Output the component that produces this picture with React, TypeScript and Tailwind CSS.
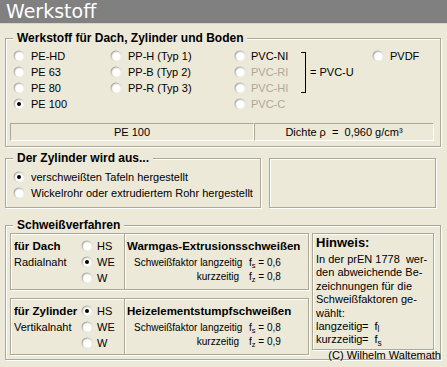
const etched = "border border-[#aca899] shadow-[inset_1px_1px_0_#fff,1px_1px_0_#fff]";
const sunken = "border border-t-[#aca899] border-l-[#aca899] border-b-white border-r-white";

function Dot({ checked }: { checked?: boolean }) {
  return (
    <svg width="12" height="12" viewBox="0 0 12 12" className="shrink-0">
      <defs>
        <linearGradient id="ro" x1="0" y1="0" x2="1" y2="1">
          <stop offset="0" stopColor="#8a8a8a" />
          <stop offset="0.55" stopColor="#d8d8d0" />
          <stop offset="1" stopColor="#ffffff" />
        </linearGradient>
        <linearGradient id="ri" x1="0" y1="0" x2="1" y2="1">
          <stop offset="0" stopColor="#c4c4c0" />
          <stop offset="0.6" stopColor="#ffffff" />
        </linearGradient>
      </defs>
      <circle cx="6" cy="6" r="5.5" fill="url(#ro)" />
      <circle cx="6" cy="6" r="4.5" fill="url(#ri)" />
      <circle cx="6" cy="6" r="3.5" fill="#fff" />
      {checked && <circle cx="6" cy="6" r="2" fill="#000" />}
    </svg>
  );
}

function Radio({ label, checked, disabled, gap = "gap-[6px]" }: { label: string; checked?: boolean; disabled?: boolean; gap?: string }) {
  return (
    <div className={`flex items-center h-[16px] ${gap}`}>
      <Dot checked={checked} />
      <span className={`whitespace-nowrap ${disabled ? "text-[#aca899]" : ""}`}>{label}</span>
    </div>
  );
}

function Factor({ long, short, a, b }: { long: string; short: string; a: string; b: string }) {
  return (
    <div className="mt-[2px] pl-[7px] grid grid-cols-[105px_auto] gap-x-[10px] text-[10px] leading-[14px]">
      <span className="text-right whitespace-nowrap">Schweißfaktor langzeitig</span>
      <span className="whitespace-nowrap">f<sub>s</sub> = {long}</span>
      <span className="text-right">kurzzeitig</span>
      <span className="whitespace-nowrap">f<sub>z</sub> = {short}</span>
      <span className="hidden">{a}{b}</span>
    </div>
  );
}

function WeldRow({ name, seam, checked, title, long, short }: { name: string; seam: string; checked: string; title: string; long: string; short: string }) {
  return (
    <div className={`flex w-[299px] h-[57px] ${etched}`}>
      <div className="flex w-[114px] pl-[3px] pt-[4px] border-r border-[#aca899]">
        <div className="w-[67px]">
          <div className="font-bold text-[11.5px] leading-[16px] whitespace-nowrap">{name}</div>
          <div>{seam}</div>
        </div>
        <div>
          {["HS", "WE", "W"].map((l) => (
            <Radio key={l} label={l} checked={l === checked} gap="gap-[4px]" />
          ))}
        </div>
      </div>
      <div className="flex-1 pl-[2px] pt-[4px] shadow-[inset_1px_0_0_#fff]">
        <div className="font-bold text-[11.5px] leading-[16px] whitespace-nowrap">{title}</div>
        <Factor long={long} short={short} a="" b="" />
      </div>
    </div>
  );
}

export default function App() {
  return (
    <div className="w-[447px] h-[367px] overflow-hidden bg-[#ece9d8] text-black text-[11px] leading-[16px] font-['Liberation_Sans',Arial,sans-serif]">
      <div className="h-[24px] bg-[#808080] border-b border-[#d4d4d4] pl-[6px] text-white text-[19px] leading-[23px] font-['DejaVu_Sans',sans-serif]">
        Werkstoff
      </div>

      <fieldset className={`ml-[5px] mt-[7px] w-[436px] px-[4px] pb-[5px] ${etched}`}>
        <legend className="ml-[3px] px-[4px] bg-[#ece9d8] font-bold text-[12px] leading-[14px]">
          Werkstoff für Dach, Zylinder und Boden
        </legend>
        <div className="flex pt-[3px]">
          <div className="w-[100px] pl-[3px]">
            <Radio label="PE-HD" />
            <Radio label="PE 63" />
            <Radio label="PE 80" />
            <Radio label="PE 100" checked />
          </div>
          <div className="w-[124px]">
            <Radio label="PP-H (Typ 1)" />
            <Radio label="PP-B (Typ 2)" />
            <Radio label="PP-R (Typ 3)" />
          </div>
          <div className="w-[67px]">
            <Radio label="PVC-NI" gap="gap-[5px]" />
            <Radio label="PVC-RI" gap="gap-[5px]" disabled />
            <Radio label="PVC-HI" gap="gap-[5px]" disabled />
            <Radio label="PVC-C" gap="gap-[5px]" disabled />
          </div>
          <div className="w-[71px] h-[48px] flex items-center">
            <div className="w-[5px] h-[41px] border-y border-r border-black" />
            <span className="ml-[4px] whitespace-nowrap">= PVC-U</span>
          </div>
          <div>
            <Radio label="PVDF" />
          </div>
        </div>
        <div className="flex mt-[11px] text-center leading-[16px]">
          <div className={`w-[244px] h-[18px] ${sunken}`}>PE 100</div>
          <div className={`w-[180px] h-[18px] whitespace-pre ${sunken}`}>Dichte ρ  =  0,960 g/cm³</div>
        </div>
      </fieldset>

      <div className="flex ml-[5px] mt-[4px]">
        <fieldset className={`w-[256px] px-[4px] pt-[4px] pb-[6px] ${etched}`}>
          <legend className="ml-[3px] px-[4px] bg-[#ece9d8] font-bold text-[12px] leading-[14px]">
            Der Zylinder wird aus...
          </legend>
          <div className="pl-[3px]">
            <Radio label="verschweißten Tafeln hergestellt" checked />
            <Radio label="Wickelrohr oder extrudiertem Rohr hergestellt" />
          </div>
        </fieldset>
        <div className={`ml-[8px] mt-[7px] w-[167px] ${etched}`} />
      </div>

      <fieldset className={`relative ml-[5px] mt-[10px] w-[436px] px-[4px] pt-[1px] pb-[4px] ${etched}`}>
        <legend className="ml-[3px] px-[4px] bg-[#ece9d8] font-bold text-[12px] leading-[14px]">
          Schweißverfahren
        </legend>
        <div className="flex">
          <div className="flex flex-col gap-[8px]">
            <WeldRow name="für Dach" seam="Radialnaht" checked="WE" title="Warmgas-Extrusionsschweißen" long="0,6" short="0,8" />
            <WeldRow name="für Zylinder" seam="Vertikalnaht" checked="HS" title="Heizelementstumpfschweißen" long="0,8" short="0,9" />
          </div>
          <div className={`ml-[3px] w-[122px] h-[117px] pl-[3px] pt-[2px] ${etched}`}>
            <div className="font-bold text-[13px] leading-[14px]">Hinweis:</div>
            <div className="mt-[3px] leading-[13.4px] whitespace-pre">
              <div>In der prEN 1778  wer-</div>
              <div>den abweichende Be-</div>
              <div>zeichnungen für die</div>
              <div>Schweißfaktoren ge-</div>
              <div>wählt:</div>
              <div><span className="inline-block w-[46px]">langzeitig</span>=  f<sub>l</sub></div>
              <div><span className="inline-block w-[46px]">kurzzeitig</span>=  f<sub>s</sub></div>
            </div>
          </div>
        </div>
        <div className="absolute right-[-1px] bottom-[-2px] leading-[12px] whitespace-nowrap">(C) Wilhelm Waltemath</div>
      </fieldset>
    </div>
  );
}
